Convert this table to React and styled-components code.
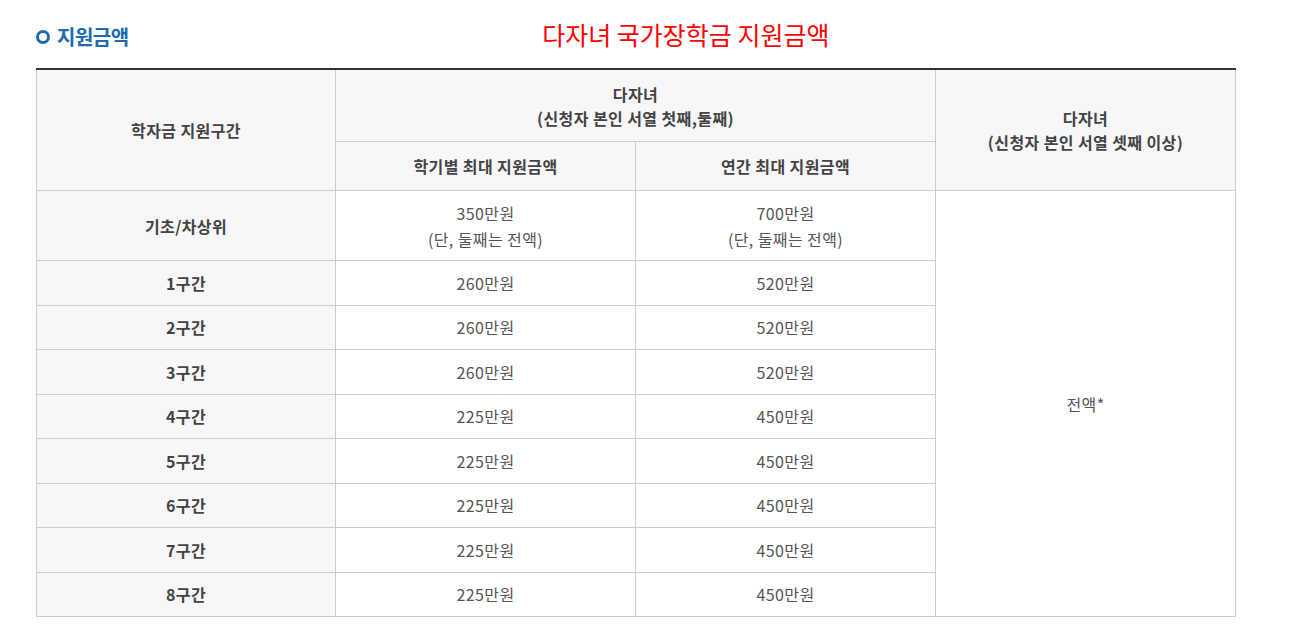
import React from 'react'
import styled, { createGlobalStyle } from 'styled-components'

const GlobalStyle = createGlobalStyle`
  html, body {
    margin: 0;
    padding: 0;
    background: #fff;
    font-family: "Noto Sans CJK KR", "Noto Sans", sans-serif;
  }
`

const rows = [
  { label: '1구간', sem: '260만원', year: '520만원' },
  { label: '2구간', sem: '260만원', year: '520만원' },
  { label: '3구간', sem: '260만원', year: '520만원' },
  { label: '4구간', sem: '225만원', year: '450만원' },
  { label: '5구간', sem: '225만원', year: '450만원' },
  { label: '6구간', sem: '225만원', year: '450만원' },
  { label: '7구간', sem: '225만원', year: '450만원' },
  { label: '8구간', sem: '225만원', year: '450만원' },
]

const App = () => {
  return (
    <Page>
      <GlobalStyle />
      <TitleBar>
        <SectionTitle>
          <Ring />
          지원금액
        </SectionTitle>
        <MainTitle>다자녀 국가장학금 지원금액</MainTitle>
      </TitleBar>

      <Table>
        <colgroup>
          <col style={{ width: 299 }} />
          <col style={{ width: 300 }} />
          <col style={{ width: 300 }} />
          <col style={{ width: 300 }} />
        </colgroup>
        <thead>
          <tr>
            <Th rowSpan={2} height={71}>학자금 지원구간</Th>
            <Th colSpan={2} height={71}>
              다자녀
              <br />
              (신청자 본인 서열 첫째,둘째)
            </Th>
            <Th rowSpan={2}>
              다자녀
              <br />
              (신청자 본인 서열 셋째 이상)
            </Th>
          </tr>
          <tr>
            <Th height={48}>학기별 최대 지원금액</Th>
            <Th height={48}>연간 최대 지원금액</Th>
          </tr>
        </thead>
        <tbody>
          <tr>
            <RowHead height={69}>기초/차상위</RowHead>
            <Td>
              350만원
              <br />
              (단, 둘째는 전액)
            </Td>
            <Td>
              700만원
              <br />
              (단, 둘째는 전액)
            </Td>
            <Td rowSpan={9}>전액*</Td>
          </tr>
          {rows.map((r) => (
            <tr key={r.label}>
              <RowHead height={43.5}>{r.label}</RowHead>
              <Td>{r.sem}</Td>
              <Td>{r.year}</Td>
            </tr>
          ))}
        </tbody>
      </Table>
    </Page>
  )
}

export default App

const Page = styled.div`
  width: 1199px;
  padding: 19px 0 10px 36px;
`

const TitleBar = styled.div`
  display: flex;
  align-items: center;
  height: 34px;
  margin-bottom: 15px;
`

const SectionTitle = styled.h3`
  display: flex;
  align-items: center;
  gap: 7px;
  margin: 0;
  font-size: 20px;
  font-weight: 700;
  color: #1f69b1;
  letter-spacing: -0.5px;
`

const Ring = styled.span`
  display: inline-block;
  width: 8px;
  height: 8px;
  border: 3px solid #1f69b1;
  border-radius: 50%;
  margin-top: 1px;
`

const MainTitle = styled.h2`
  flex: 1;
  margin: -4px 0 0;
  text-align: center;
  font-size: 25px;
  font-weight: 400;
  color: #ff0000;
  padding-left: 8px;
`

const Table = styled.table`
  width: 1199px;
  table-layout: fixed;
  border-collapse: collapse;
  border-top: 2px solid #333;
  font-size: 16px;
  letter-spacing: 0.4px;
`

const Th = styled.th`
  height: ${(p) => (p.height ? `${p.height}px` : 'auto')};
  padding: 0 10px;
  border: 1px solid #ccc;
  border-top: none;
  background: #f7f7f9;
  color: #444;
  font-weight: 700;
  line-height: 24px;
  text-align: center;
  vertical-align: middle;
`

const RowHead = styled.th`
  height: ${(p) => p.height}px;
  padding: 0 10px;
  border: 1px solid #ccc;
  background: #f7f7f9;
  color: #444;
  font-weight: 700;
  text-align: center;
  vertical-align: middle;
`

const Td = styled.td`
  padding: 0 10px;
  border: 1px solid #ccc;
  background: #fff;
  color: #555;
  line-height: 26px;
  text-align: center;
  vertical-align: middle;
`
